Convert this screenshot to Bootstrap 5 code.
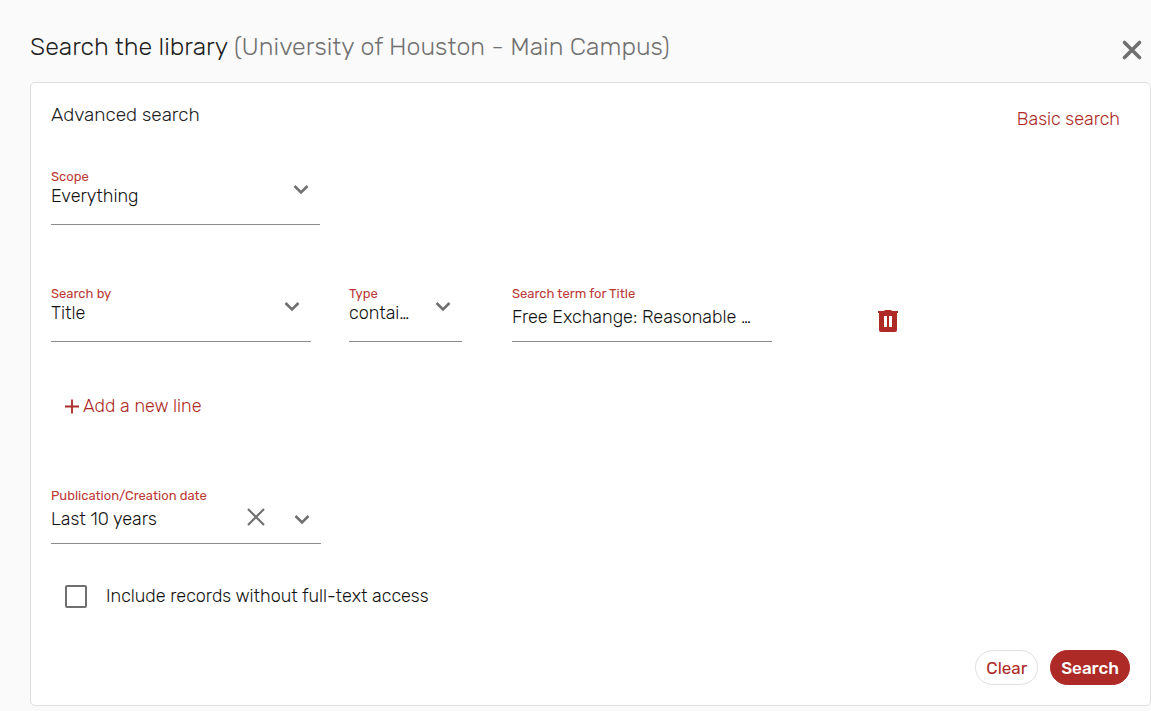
<!DOCTYPE html>
<html lang="en">
<head>
<meta charset="utf-8">
<meta name="viewport" content="width=device-width, initial-scale=1">
<title>Search the library</title>
<link href="https://cdn.jsdelivr.net/npm/bootstrap@5.3.0/dist/css/bootstrap.min.css" rel="stylesheet">
<style>
  :root { --brand: #ad2a26; --ink: #212121; --muted-ink: #707070; --line: #e0e0e0; }
  body { background: #fafafa; color: #111; font-family: Rubik, Roboto, sans-serif; font-size: 18px; line-height: 24px; font-weight: 300; }
  .page-title { color: var(--ink); font-size: 25px; line-height: 34px; font-weight: 300; }
  .page-title span { color: var(--muted-ink); }
  .page-head { padding: 30px 7px 18px 30px; }
  .panel { background: #fff; border: 1px solid var(--line); border-radius: 5px; margin: 0 0 5px 30px; padding: 20px; }
  .panel-title { color: var(--ink); font-size: 19px; line-height: 24px; font-weight: 300; }
  .link-brand, .link-brand:hover { color: var(--brand); }
  .link-brand { margin-right: 10px; }
  .icon-btn { background: none; border: 0; padding: 0; line-height: 0; color: var(--muted-ink); font-weight: inherit; }
  .field { max-width: 100%; position: relative; }
  .field label { display: block; color: #bb3a37; font-size: 13px; line-height: 17px; font-weight: 400; }
  .field .form-select, .field .form-control {
    color: inherit; background-color: transparent; border: 0; border-bottom: 1px solid #8c8c8c; border-radius: 0;
    font-size: 18px; line-height: 22px; font-weight: inherit; height: 40px; padding: 0 0 17px; box-shadow: none; text-overflow: ellipsis;
  }
  .field .form-select {
    padding-right: 40px;
    background-image: url("data:image/svg+xml,%3Csvg xmlns='http://www.w3.org/2000/svg' viewBox='0 0 16 10'%3E%3Cpath d='M1.5 1 8 7.500l6.500-6.500' fill='none' stroke='%23707070' stroke-width='2.600'/%3E%3C/svg%3E");
    background-size: 16px 10px; background-position: right 11px top 0;
  }
  .field .low { padding-top: 4px; padding-bottom: 13px; }
  .field .form-select.low { background-position: right 11px top 11px; }
  .clear-date { position: absolute; right: 56px; bottom: 18px; }
  .scope-row { margin-top: 37px; }
  .w-scope { width: 269px; } .w-by { width: 260px; } .w-type { width: 113px; } .w-date { width: 270px; }
  .term-row { gap: 38px; margin-top: 60px; }
  .term-field { margin-left: 12px; }
  .term-row .icon-btn { color: var(--brand); margin: 14px 0 0 68px; }
  .add-line { color: var(--brand); margin: 51px 0 0 14px; }
  .date-row { margin-top: 67px; }
  .full-text { margin: 40px 0 0 14px; gap: 19px; }
  .full-text .form-check-input { width: 22px; height: 23px; margin: 0; border: 2px solid var(--muted-ink); border-radius: 2px; }
  .actions { gap: 12px; margin-top: 42px; }
  .pill { height: 35px; padding: 0 10px; border-radius: 18px; font-size: 17px; line-height: 24px; color: var(--brand); border: 1px solid var(--line); background: #fff; font-weight: 400; }
  .pill-main { color: #fff; background: var(--brand); border-color: var(--brand); font-weight: 500; }
</style>
</head>
<body>
<header class="page-head d-flex justify-content-between align-items-start">
  <h1 class="page-title m-0">Search the library <span>(University of Houston - Main Campus)</span></h1>
  <button class="icon-btn mt-2" type="button" aria-label="Close">
    <svg width="24" height="24" viewBox="0 0 24 24"><path d="M4.500 4.500l15 15M19.500 4.500l-15 15" fill="none" stroke="currentColor" stroke-width="3.600" stroke-linecap="round"/></svg>
  </button>
</header>
<main class="panel">
  <form>
    <div class="d-flex justify-content-between align-items-start">
      <h2 class="panel-title m-0">Advanced search</h2>
      <a class="link-brand text-decoration-none pt-1" href="#">Basic search</a>
    </div>
    <div class="field w-scope scope-row">
      <label for="scope">Scope</label>
      <select class="form-select" id="scope"><option>Everything</option></select>
    </div>
    <div class="term-row d-flex flex-wrap align-items-start">
      <div class="field w-by">
        <label for="by">Search by</label>
        <select class="form-select" id="by"><option>Title</option></select>
      </div>
      <div class="field w-type">
        <label for="type">Type</label>
        <select class="form-select" id="type"><option>contai…</option></select>
      </div>
      <div class="field w-by term-field">
        <label for="term">Search term for Title</label>
        <input class="form-control low" id="term" type="text" value="Free Exchange: Reasonable …">
      </div>
      <button class="icon-btn align-self-center" type="button" aria-label="Delete line">
        <svg width="20" height="24" viewBox="0 0 20 24"><path d="M0 2h6l1-1h6l1 1h6v2H0zM1 4h18v17q0 2-2 2H3q-2 0-2-2zM6 7v11h3V7zM11 7v11h3V7z" fill="currentColor" fill-rule="evenodd"/></svg>
      </button>
    </div>
    <button class="icon-btn add-line d-flex align-items-center gap-1" type="button">
      <svg width="14" height="24" viewBox="0 0 14 24"><path d="M7 4.500v14M0 11.500h14" fill="none" stroke="currentColor" stroke-width="1.800"/></svg>
      <span class="lh-base">Add a new line</span>
    </button>
    <div class="field w-date date-row">
      <label for="date">Publication/Creation date</label>
      <select class="form-select low" id="date"><option>Last 10 years</option></select>
      <button class="icon-btn clear-date" type="button" aria-label="Clear date">
        <svg width="18" height="18" viewBox="0 0 18 18"><path d="M1 1l16 16M17 1L1 17" fill="none" stroke="currentColor" stroke-width="2.200"/></svg>
      </button>
    </div>
    <div class="full-text d-flex align-items-center">
      <input class="form-check-input" type="checkbox" id="full">
      <label for="full">Include records without full-text access</label>
    </div>
    <div class="actions d-flex justify-content-end">
      <button class="pill" type="reset">Clear</button>
      <button class="pill pill-main" type="submit">Search</button>
    </div>
  </form>
</main>
<script src="https://cdn.jsdelivr.net/npm/bootstrap@5.3.0/dist/js/bootstrap.bundle.min.js"></script>
</body>
</html>
